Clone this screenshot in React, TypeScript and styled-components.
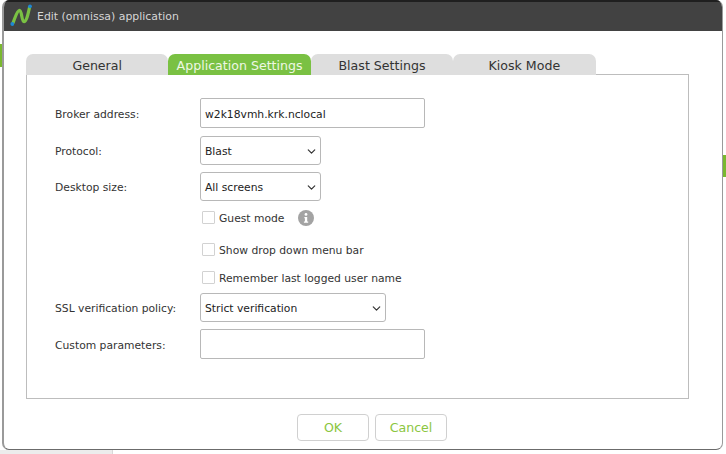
import styled, { createGlobalStyle } from "styled-components";
import { ChevronDown } from "lucide-react";

const Global = createGlobalStyle`
	html, body {
		margin: 0;
		padding: 0;
		width: 726px;
		height: 454px;
		overflow: hidden;
		background: #fff;
	}
	* {
		box-sizing: border-box;
	}
`;

const tabs = ["General", "Application Settings", "Blast Settings", "Kiosk Mode"];

const Logo = () => (
	<LogoMark width="22" height="22" viewBox="0 0 22 22">
		<path
			d="M3 19 C5 14 7 6.3 9.5 6.3 C12 6.3 11.5 17.7 14 17.7 C16.5 17.7 18 10 19.5 3.5"
			fill="none"
			stroke="#7ac143"
			strokeWidth="3.2"
			strokeLinecap="round"
		/>
		<circle cx="2.3" cy="20" r="1.9" fill="#1e88d2" />
		<circle cx="20" cy="2.3" r="1.9" fill="#1e88d2" />
	</LogoMark>
);

const InfoGlyph = () => (
	<svg width="16" height="16" viewBox="0 0 16 16">
		<circle cx="8" cy="8" r="8" fill="#a3a3a3" />
		<circle cx="8" cy="4.4" r="1.4" fill="#fff" />
		<path d="M6.4 7h2.8v4.6h1v1.2H5.9v-1.2h1V8.2h-.5z" fill="#fff" />
	</svg>
);

const Select = ({ value, wide }: { value: string; wide?: boolean }) => (
	<SelectBox $wide={wide}>
		{value}
		<ChevronDown size={13} strokeWidth={2.2} color="#333" />
	</SelectBox>
);

const App = () => {
	return (
		<Desktop>
			<Global />
			<LeftStripe />
			<RightStripe />
			<Dialog>
				<TitleBar>
					<Logo />
					<TitleText>Edit (omnissa) application</TitleText>
				</TitleBar>
				<Body>
					<TabRow>
						{tabs.map((tab, i) => (
							<Tab key={tab} $active={i === 1}>
								{tab}
							</Tab>
						))}
					</TabRow>
					<Panel>
						<Row>
							<Label>Broker address:</Label>
							<TextBox>w2k18vmh.krk.nclocal</TextBox>
						</Row>
						<Row $top={8}>
							<Label>Protocol:</Label>
							<Select value="Blast" />
						</Row>
						<Row $top={7}>
							<Label>Desktop size:</Label>
							<Select value="All screens" />
						</Row>
						<CheckRow $top={10}>
							<Box />
							<CheckText>Guest mode</CheckText>
							<InfoIcon>
								<InfoGlyph />
							</InfoIcon>
						</CheckRow>
						<CheckRow $top={19}>
							<Box />
							<CheckText>Show drop down menu bar</CheckText>
						</CheckRow>
						<CheckRow $top={15}>
							<Box />
							<CheckText>Remember last logged user name</CheckText>
						</CheckRow>
						<Row $top={9}>
							<Label>SSL verification policy:</Label>
							<Select value="Strict verification" wide />
						</Row>
						<Row $top={7}>
							<Label>Custom parameters:</Label>
							<TextBox />
						</Row>
					</Panel>
					<Footer>
						<Button>OK</Button>
						<Button>Cancel</Button>
					</Footer>
				</Body>
			</Dialog>
			<BottomStrip />
		</Desktop>
	);
};

const Desktop = styled.div`
	position: relative;
	width: 726px;
	height: 454px;
	padding: 0 3px 0 2px;
	background: #fff;
	font-family: "DejaVu Sans", sans-serif;
	color: #333;
`;

const LeftStripe = styled.div`
	position: absolute;
	left: 0;
	top: 44px;
	width: 2px;
	height: 23px;
	background: #7ab82f;
`;

const RightStripe = styled.div`
	position: absolute;
	right: 0;
	top: 155px;
	width: 3px;
	height: 22px;
	background: #7ab82f;
`;

const BottomStrip = styled.div`
	height: 4px;
	width: 113px;
	margin-left: -2px;
	background: #ececec;
	border-right: 1px solid #d8d8d8;
`;

const Dialog = styled.div`
	width: 721px;
	height: 450px;
	display: flex;
	flex-direction: column;
	background: #fff;
	border: 1px solid #6b6b6b;
	border-left: 2px solid #9a9a9a;
	border-right: 1px solid #9a9a9a;
	border-top: 0;
	border-radius: 7px;
	overflow: hidden;
`;

const TitleBar = styled.div`
	display: flex;
	align-items: center;
	gap: 5px;
	height: 31px;
	flex: none;
	padding-left: 6px;
	background: #424242;
	border-top: 2px solid #1f1f1f;
`;

const LogoMark = styled.svg`
	margin-bottom: 4px;
`;

const TitleText = styled.span`
	font-size: 10.9px;
	color: #d6d6d6;
`;

const Body = styled.div`
	display: flex;
	flex-direction: column;
	flex: 1;
	padding: 23px 33px 0 22px;
`;

const TabRow = styled.div`
	display: flex;
	height: 21px;
	flex: none;
	position: relative;
	z-index: 1;
`;

const Tab = styled.div<{ $active?: boolean }>`
	width: 142.4px;
	height: 21px;
	display: flex;
	align-items: center;
	justify-content: center;
	padding-top: 2px;
	border-radius: 7px 7px 0 0;
	font-size: 12.6px;
	background: ${({ $active }) => ($active ? "#7ac143" : "#dedede")};
	color: ${({ $active }) => ($active ? "#eef7e4" : "#333")};
`;

const Panel = styled.div`
	height: 325px;
	margin-top: -1px;
	padding: 23px 28px 0;
	border: 1px solid #bdbdbd;
	display: flex;
	flex-direction: column;
	align-items: flex-start;
`;

const Row = styled.div<{ $top?: number }>`
	display: flex;
	align-items: center;
	margin-top: ${({ $top }) => $top ?? 0}px;
`;

const Label = styled.span`
	width: 145px;
	padding-top: 2px;
	font-size: 10.75px;
	color: #333;
`;

const TextBox = styled.div`
	width: 225px;
	height: 30px;
	display: flex;
	align-items: center;
	padding: 2px 0 0 4px;
	font-size: 10.75px;
	color: #222;
	background: #fff;
	border: 1px solid #b8b8b8;
	border-radius: 2px;
`;

const SelectBox = styled.div<{ $wide?: boolean }>`
	width: ${({ $wide }) => ($wide ? 186 : 121)}px;
	height: 29px;
	display: flex;
	align-items: center;
	justify-content: space-between;
	padding: 1px 2px 0 4px;
	font-size: 10.75px;
	color: #222;
	border: 1px solid #b8b8b8;
	border-radius: 3px;
`;

const CheckRow = styled.div<{ $top: number }>`
	display: flex;
	align-items: center;
	gap: 4px;
	height: 13px;
	margin-top: ${({ $top }) => $top}px;
	margin-left: 147px;
`;

const CheckText = styled.span`
	padding-top: 2px;
	font-size: 10.75px;
	color: #333;
`;

const Box = styled.span`
	width: 13px;
	height: 13px;
	border: 1px solid #d2d2d2;
	border-radius: 1px;
`;

const InfoIcon = styled.span`
	display: flex;
	margin-left: 10px;
`;

const Footer = styled.div`
	display: flex;
	gap: 6px;
	margin-top: 15px;
	padding-left: 271px;
`;

const Button = styled.div`
	width: 72px;
	height: 27px;
	display: flex;
	align-items: center;
	justify-content: center;
	font-size: 12.6px;
	color: #8cc63f;
	border: 1px solid #d0d0d0;
	border-radius: 4px;
`;

export default App;
